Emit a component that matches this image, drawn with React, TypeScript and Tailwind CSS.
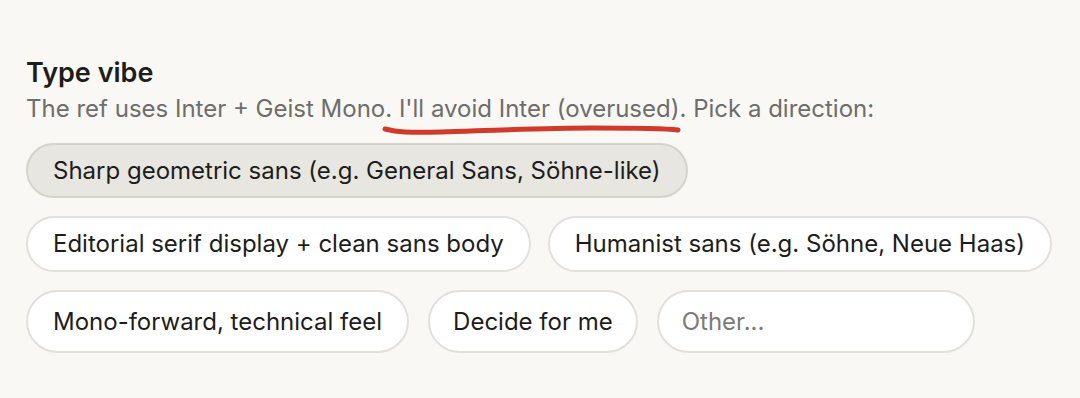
const options = [
  "Editorial serif display + clean sans body",
  "Humanist sans (e.g. Söhne, Neue Haas)",
];

const Pill = ({ label, selected = false }: { label: string; selected?: boolean }) => (
  <button
    className={
      selected
        ? "h-[55px] rounded-full border-2 border-[#d6d3cc] bg-[#e8e6e1] px-[25px] text-[24px] text-[#1d1d1b] whitespace-nowrap"
        : "h-[56px] rounded-full border-2 border-[#e2e0db] bg-white px-[25px] text-[24px] text-[#1d1d1b] whitespace-nowrap"
    }
  >
    {label}
  </button>
);

const App = () => {
  return (
    <div
      className="h-[398px] w-[1080px] bg-[#f9f8f5] px-[26px] pt-[56px]"
      style={{ fontFamily: "Inter, 'Noto Sans', sans-serif" }}
    >
      <h2 className="text-[27px] font-semibold leading-[34px] text-[#1d1d1b]">Type vibe</h2>

      {/* subtitle with red hand-drawn underline */}
      <div className="relative mt-[4px] text-[24px] leading-[30px] text-[#6e6d6a]">
        The ref uses Inter + Geist Mono. I'll avoid Inter (overused). Pick a direction:
        <svg
          className="absolute left-[356px] top-[25px]"
          width="300"
          height="20"
          viewBox="0 0 300 20"
          fill="none"
        >
          <path
            d="M3 10 C 15 13, 25 14, 60 13 S 160 9, 210 9 S 280 9, 296 11"
            stroke="#d03a28"
            strokeWidth="5"
            strokeLinecap="round"
          />
        </svg>
      </div>

      <div className="mt-[19px] flex flex-col gap-[18px]">
        <div className="flex">
          <Pill label="Sharp geometric sans (e.g. General Sans, Söhne-like)" selected />
        </div>
        <div className="flex gap-[17px]">
          {options.map((o) => (
            <Pill key={o} label={o} />
          ))}
        </div>
        <div className="flex h-[63px] gap-[19px]">
          <button className="h-full rounded-full border-2 border-[#e2e0db] bg-white px-[25px] text-[24px] text-[#1d1d1b] whitespace-nowrap">
            Mono-forward, technical feel
          </button>
          <button className="h-full rounded-full border-2 border-[#e2e0db] bg-white px-[23px] text-[24px] text-[#1d1d1b] whitespace-nowrap">
            Decide for me
          </button>
          <input
            placeholder="Other..."
            className="h-full w-[318px] rounded-full border-2 border-[#e2e0db] bg-white px-[23px] text-[24px] text-[#1d1d1b] outline-none placeholder:text-[#7b7a77]"
          />
        </div>
      </div>
    </div>
  );
};

export default App;
